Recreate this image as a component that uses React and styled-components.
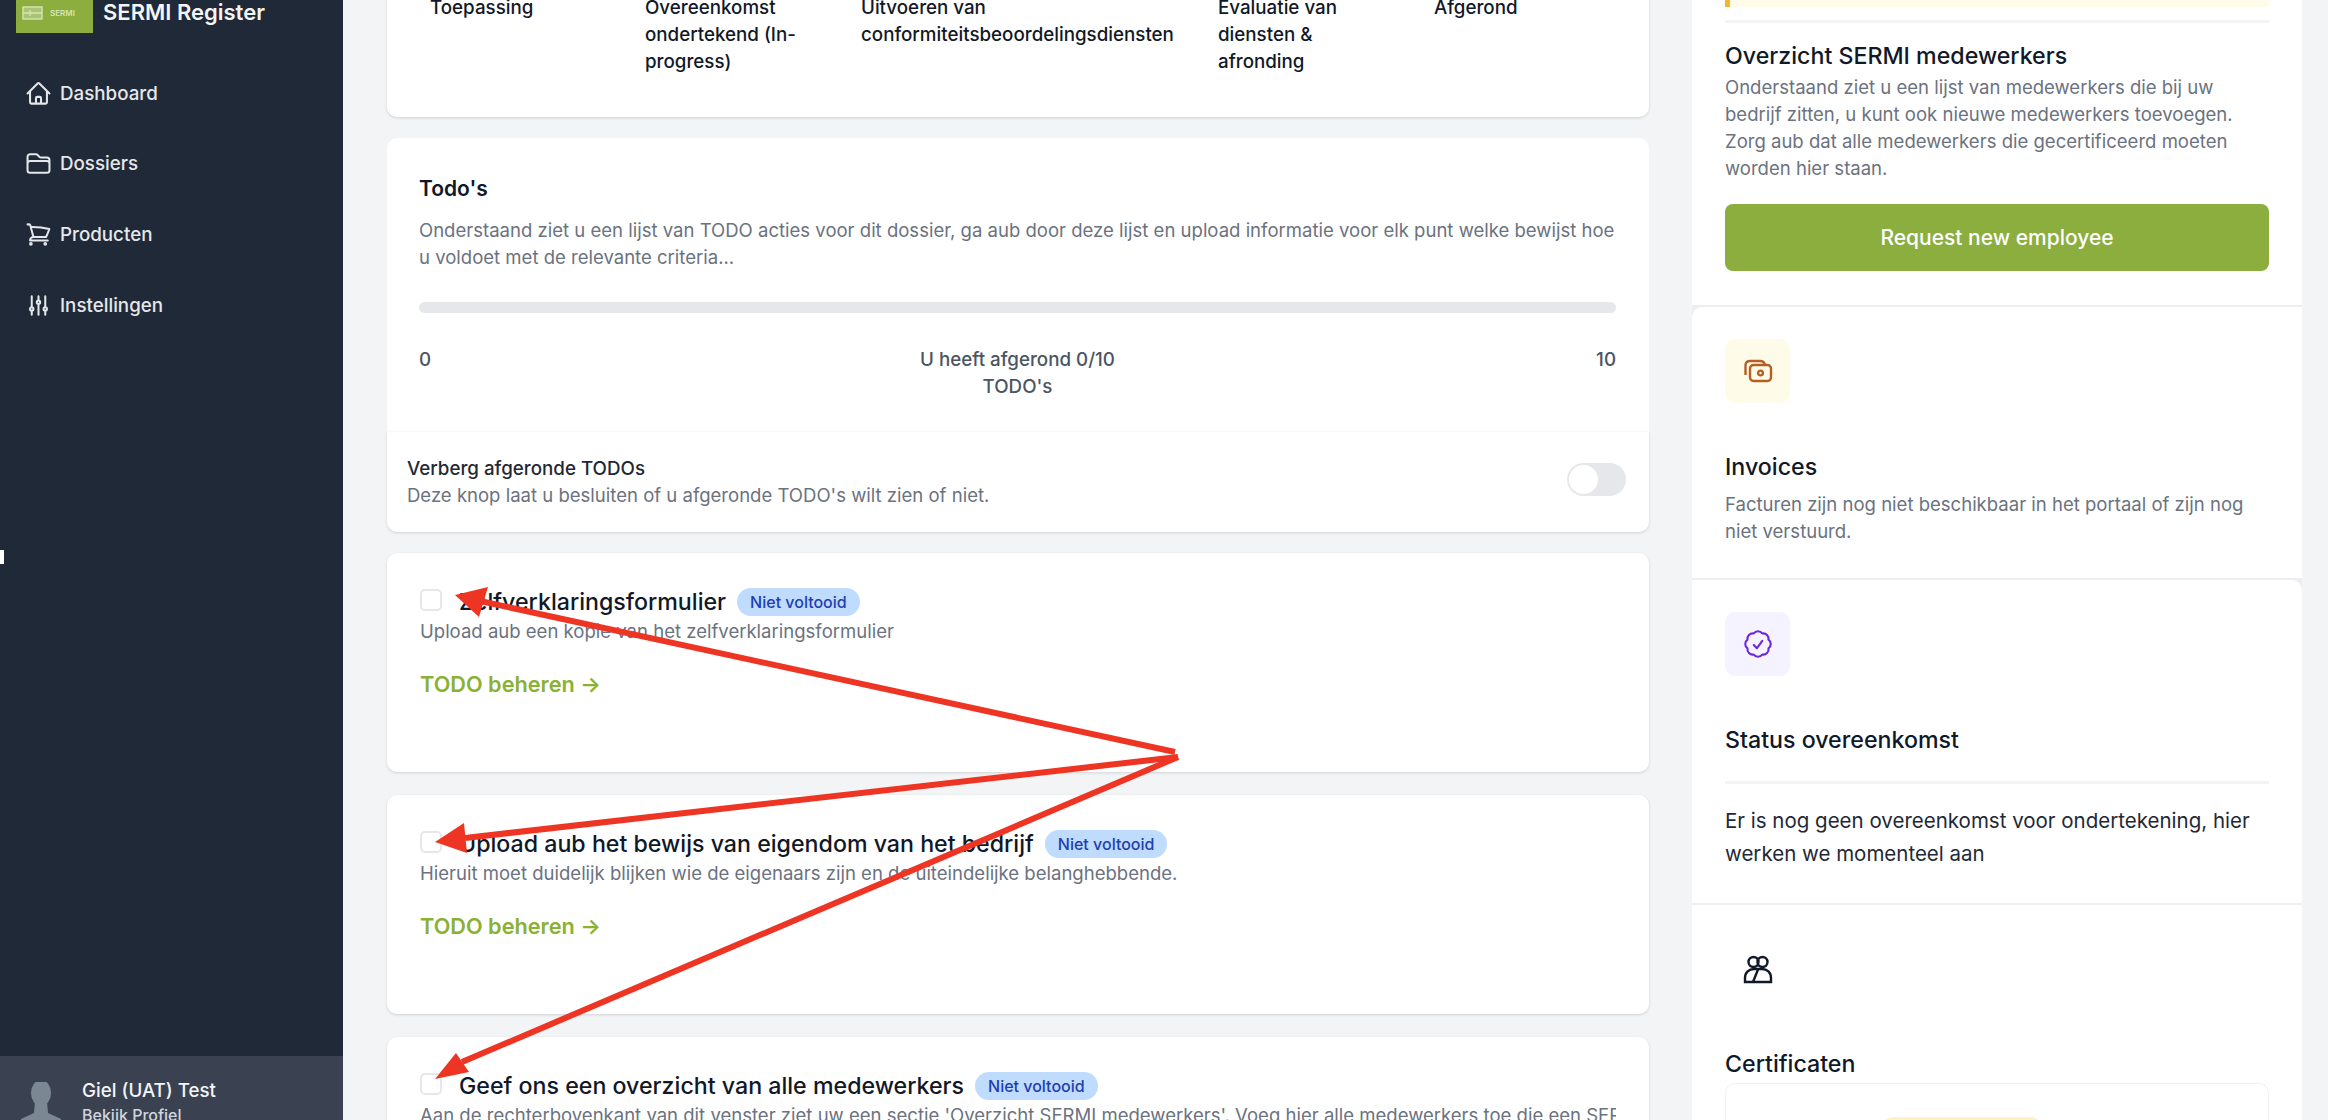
import React from "react";
import styled, { createGlobalStyle } from "styled-components";
import {
	HiOutlineHome,
	HiOutlineFolder,
	HiOutlineShoppingCart,
	HiOutlineAdjustmentsVertical,
	HiOutlineCheckBadge,
} from "react-icons/hi2";

const GlobalStyle = createGlobalStyle`
	html, body {
		margin: 0;
		padding: 0;
		height: 100%;
		overflow: hidden;
		background: #f3f4f6;
		font-family: Inter, "Liberation Sans", sans-serif;
		color: #111827;
	}
	* { box-sizing: border-box; }
`;

const Page = styled.div`
	position: relative;
	display: flex;
	width: 2328px;
	height: 1120px;
	overflow: hidden;
	background: #f3f4f6;
`;

const Sidebar = styled.aside`
	display: flex;
	flex-direction: column;
	flex: 0 0 343px;
	height: 1120px;
	background: #1f2937;
	overflow: hidden;
`;

const Brand = styled.div`
	display: flex;
	align-items: center;
	gap: 10px;
	height: 65px;
	margin-top: -32px;
	padding-left: 16px;
	flex: 0 0 auto;
`;

const BrandLogo = styled.div`
	display: flex;
	align-items: center;
	gap: 7px;
	width: 77px;
	height: 65px;
	padding: 25px 0 0 6px;
	background: #8bae3f;
`;

const BrandLogoText = styled.span`
	font-size: 8px;
	font-weight: 600;
	color: #d7e4b4;
`;

const BrandName = styled.span`
	padding-top: 23px;
	font-size: 22px;
	font-weight: 600;
	color: #f3f4f6;
`;

const Nav = styled.nav`
	display: flex;
	flex-direction: column;
	gap: 30.8px;
	padding: 40px 0 0 25px;
`;

const NavItem = styled.a`
	display: flex;
	align-items: center;
	gap: 8px;
	height: 40px;
	font-size: 18.76px;
	font-weight: 500;
	color: #e5e7eb;
	svg {
		font-size: 27px;
		stroke-width: 1.8;
	}
`;

const Profile = styled.div`
	display: flex;
	gap: 21px;
	flex: 0 0 64px;
	margin-top: auto;
	padding: 26px 0 0 21px;
	background: #3a4252;
	overflow: hidden;
`;

const ProfileText = styled.div`
	display: flex;
	flex-direction: column;
	margin-top: -4px;
	white-space: nowrap;
`;

const ProfileName = styled.span`
	font-size: 18.76px;
	font-weight: 500;
	line-height: 26px;
	color: #f3f4f6;
`;

const ProfileLink = styled.span`
	font-size: 16px;
	font-weight: 500;
	line-height: 22px;
	color: #d1d5db;
`;

const Tick = styled.span`
	position: absolute;
	left: 0;
	top: 550px;
	width: 4px;
	height: 14px;
	background: #fff;
`;

const Content = styled.main`
	display: flex;
	flex: 1;
	min-width: 0;
	gap: 43px;
	padding-left: 44px;
`;

const MainColumn = styled.div`
	display: flex;
	flex-direction: column;
	flex: 0 0 1262px;
	width: 1262px;
	min-width: 0;
	margin-top: -20px;
`;

const Card = styled.section`
	flex: none;
	background: #fff;
	border-radius: 10px;
	box-shadow: 0 1px 3px rgba(0, 0, 0, 0.14);
`;

const StepsCard = styled(Card)`
	display: grid;
	grid-template-columns: 215px 216px 357px 216px 1fr;
	height: 137px;
	margin-bottom: 21px;
	padding: 14px 0 0 43px;
`;

const Step = styled.div`
	padding-right: ${props => props.$inset}px;
	font-size: 18.76px;
	font-weight: 500;
	line-height: 27px;
	color: #111827;
`;

const TodoCard = styled(Card)`
	height: 294px;
	padding: 37px 33px 0 32px;
	border-radius: 10px 10px 0 0;
	box-shadow: none;
`;

const TodoTitle = styled.h2`
	margin: 0 0 14px;
	font-size: 21px;
	font-weight: 600;
	line-height: 28px;
	color: #111827;
`;

const Muted = styled.p`
	margin: 0;
	margin-top: ${props => props.$top || 0}px;
	font-size: 18.55px;
	line-height: 27px;
	color: #6b7280;
`;

const Progress = styled.div`
	height: 11px;
	margin: 31px 0 33px;
	border-radius: 6px;
	background: #e5e7eb;
`;

const ProgressLabels = styled.div`
	display: grid;
	grid-template-columns: 1fr 212px 1fr;
	font-size: 18.76px;
	font-weight: 500;
	line-height: 27px;
	color: #4b5563;
`;

const ProgressLabel = styled.div`
	text-align: ${props => props.$align};
`;

const FilterCard = styled(Card)`
	display: flex;
	align-items: center;
	justify-content: space-between;
	height: 100px;
	margin-bottom: 21px;
	padding: 0 23px 0 20px;
	border-radius: 0 0 10px 10px;
`;

const FilterTitle = styled.div`
	font-size: 18.76px;
	font-weight: 500;
	line-height: 27px;
	color: #1f2937;
`;

const Toggle = styled.span`
	display: block;
	width: 59px;
	height: 33px;
	margin-top: -6px;
	padding: 2px;
	border-radius: 17px;
	background: #e5e7eb;
`;

const ToggleKnob = styled.span`
	display: block;
	width: 29px;
	height: 29px;
	border-radius: 50%;
	background: #fff;
`;

const TodoItem = styled(Card)`
	height: 219px;
	margin-bottom: 23px;
	padding: 33px 33px 0;
`;

const TodoHeader = styled.div`
	display: flex;
	align-items: center;
	height: 32px;
`;

const Checkbox = styled.span`
	flex: 0 0 22px;
	height: 22px;
	margin: -4px 17px 0 0;
	border: 2px solid #e5e7eb;
	border-radius: 5px;
	background: #fff;
`;

const ItemTitle = styled.h3`
	margin: 0 11px 0 0;
	font-size: 23.2px;
	font-weight: 500;
	color: #111827;
`;

const Badge = styled.span`
	display: flex;
	align-items: center;
	height: 28px;
	padding: 0 13px;
	border-radius: 14px;
	background: #bfdbfe;
	font-size: 16px;
	font-weight: 500;
	color: #1e40af;
`;

const ItemText = styled(Muted)`
	margin-top: 0;
	white-space: nowrap;
	overflow: hidden;
`;

const ManageLink = styled.a`
	display: block;
	margin-top: 25px;
	font-size: 21.7px;
	font-weight: 600;
	line-height: 28px;
	color: #8bb133;
`;

const SideColumn = styled.div`
	display: flex;
	flex-direction: column;
	flex: 0 0 610px;
	gap: 2px;
	background: #eceef1;
`;

const SideCard = styled.section`
	flex: none;
	padding: ${props => props.$padding || "32px 33px 0"};
	height: ${props => props.$height}px;
	background: #fff;
	border-radius: ${props => props.$radius || "0"};
`;

const Notice = styled.div`
	height: 7px;
	border-left: 5px solid #f5b731;
	background: #fefce8;
`;

const Divider = styled.hr`
	height: 3px;
	margin: ${props => props.$margin};
	border: 0;
	background: #f3f4f6;
`;

const SideTitle = styled.h3`
	margin: 0;
	font-size: 23.2px;
	font-weight: 500;
	line-height: 32px;
	color: #111827;
`;

const WideButton = styled.button`
	display: block;
	width: 100%;
	height: 67px;
	margin-top: 22px;
	border: 0;
	border-radius: 8px;
	background: #8bae3f;
	font-family: inherit;
	font-size: 21px;
	font-weight: 500;
	color: #fff;
`;

const IconBox = styled.div`
	display: flex;
	align-items: center;
	justify-content: center;
	width: 65px;
	height: 64px;
	margin-bottom: ${props => props.$gap}px;
	border-radius: 10px;
	background: ${props => props.$bg};
	color: ${props => props.$color};
	font-size: 34px;
`;

const BodyText = styled.p`
	margin: 0;
	font-size: 20.5px;
	line-height: 33px;
	color: #1f2937;
`;

const CertificateCard = styled.div`
	height: 120px;
	margin-top: 3px;
	padding-top: 33px;
	border: 1px solid #f0f1f3;
	border-radius: 10px;
	background: #fff;
`;

const CertificateBadge = styled.div`
	width: 164px;
	height: 40px;
	margin-left: 154px;
	border-radius: 14px;
	background: #fef3c7;
`;

const AnnotationLayer = styled.svg`
	position: absolute;
	top: 0;
	left: 0;
	pointer-events: none;
`;

const MoneyIcon = () => (
	<svg width="30" height="30" viewBox="0 0 30 30" fill="none" stroke="currentColor" strokeWidth="2.4">
		<rect x="7" y="9" width="21" height="16" rx="3.5" />
		<path d="M2.5 19V9.5C2.5 6.5 4 5 7 5H17C20 5 21.5 6.5 22 9" />
		<circle cx="17.5" cy="17" r="2.4" />
	</svg>
);

const PeopleIcon = () => (
	<svg width="30" height="30" viewBox="0 0 30 30" fill="none" stroke="currentColor" strokeWidth="2.4">
		<circle cx="10.5" cy="8" r="5" />
		<circle cx="19.5" cy="8" r="5" />
		<path d="M2 28V24C2 18.5 6 15 11 15H19C24 15 28 18.5 28 24V28Z" />
		<path d="M15 15.5L10 28" />
	</svg>
);

const AvatarIcon = () => (
	<svg width="40" height="62" viewBox="0 0 40 62" fill="#7c8794">
		<ellipse cx="20" cy="11" rx="10" ry="13" />
		<path d="M14 20H26L27 31L40 37V62H0V37L13 31Z" />
	</svg>
);

const LogoMark = () => (
	<svg width="21" height="14" viewBox="0 0 21 14" fill="none" stroke="#d7e4b4" strokeWidth="1.4">
		<rect x="1" y="1" width="19" height="12" fill="#a9c472" />
		<path d="M1 7H20M8 4V10" />
	</svg>
);

const navItems = [
	{ label: "Dashboard", Icon: HiOutlineHome },
	{ label: "Dossiers", Icon: HiOutlineFolder },
	{ label: "Producten", Icon: HiOutlineShoppingCart },
	{ label: "Instellingen", Icon: HiOutlineAdjustmentsVertical },
];

const steps = [
	{ label: "Toepassing", inset: 40 },
	{ label: "Overeenkomst ondertekend (In-progress)", inset: 40 },
	{ label: "Uitvoeren van conformiteitsbeoordelingsdiensten", inset: 0 },
	{ label: "Evaluatie van diensten & afronding", inset: 40 },
	{ label: "Afgerond", inset: 0 },
];

const todos = [
	{
		title: "Zelfverklaringsformulier",
		text: "Upload aub een kopie van het zelfverklaringsformulier",
	},
	{
		title: "Upload aub het bewijs van eigendom van het bedrijf",
		text: "Hieruit moet duidelijk blijken wie de eigenaars zijn en de uiteindelijke belanghebbende.",
	},
	{
		title: "Geef ons een overzicht van alle medewerkers",
		text: "Aan de rechterbovenkant van dit venster ziet uw een sectie 'Overzicht SERMI medewerkers'. Voeg hier alle medewerkers toe die een SERMI certificaat nodig hebben.",
	},
];

const arrows = [
	{ line: "1175,752 480,601", head: "455,595 488,587 479,617" },
	{ line: "1178,757 465,838", head: "435,842 464,823 467,853" },
	{ line: "1178,757 462,1062", head: "435,1079 456,1053 469,1072" },
];

const App = () => {
	return (
		<Page>
			<GlobalStyle />
			<Sidebar>
				<Brand>
					<BrandLogo>
						<LogoMark />
						<BrandLogoText>SERMI</BrandLogoText>
					</BrandLogo>
					<BrandName>SERMI Register</BrandName>
				</Brand>
				<Nav>
					{navItems.map(({ label, Icon }) => (
						<NavItem key={label}>
							<Icon />
							{label}
						</NavItem>
					))}
				</Nav>
				<Profile>
					<AvatarIcon />
					<ProfileText>
						<ProfileName>Giel (UAT) Test</ProfileName>
						<ProfileLink>Bekijk Profiel</ProfileLink>
					</ProfileText>
				</Profile>
			</Sidebar>
			<Tick />
			<Content>
				<MainColumn>
					<StepsCard>
						{steps.map(step => (
							<Step key={step.label} $inset={step.inset}>
								{step.label}
							</Step>
						))}
					</StepsCard>
					<TodoCard>
						<TodoTitle>Todo's</TodoTitle>
						<Muted>
							Onderstaand ziet u een lijst van TODO acties voor dit dossier, ga aub door deze lijst en upload informatie voor elk punt welke bewijst hoe u voldoet met de relevante criteria...
						</Muted>
						<Progress />
						<ProgressLabels>
							<ProgressLabel $align="left">0</ProgressLabel>
							<ProgressLabel $align="center">U heeft afgerond 0/10 TODO's</ProgressLabel>
							<ProgressLabel $align="right">10</ProgressLabel>
						</ProgressLabels>
					</TodoCard>
					<FilterCard>
						<div>
							<FilterTitle>Verberg afgeronde TODOs</FilterTitle>
							<Muted>Deze knop laat u besluiten of u afgeronde TODO's wilt zien of niet.</Muted>
						</div>
						<Toggle>
							<ToggleKnob />
						</Toggle>
					</FilterCard>
					{todos.map(todo => (
						<TodoItem key={todo.title}>
							<TodoHeader>
								<Checkbox />
								<ItemTitle>{todo.title}</ItemTitle>
								<Badge>Niet voltooid</Badge>
							</TodoHeader>
							<ItemText>{todo.text}</ItemText>
							<ManageLink>TODO beheren →</ManageLink>
						</TodoItem>
					))}
				</MainColumn>
				<SideColumn>
					<SideCard $padding="0 33px" $height={305}>
						<Notice />
						<Divider $margin="13px 0 17px" />
						<SideTitle>Overzicht SERMI medewerkers</SideTitle>
						<Muted $top={2}>
							Onderstaand ziet u een lijst van medewerkers die bij uw bedrijf zitten, u kunt ook nieuwe medewerkers toevoegen. Zorg aub dat alle medewerkers die gecertificeerd moeten worden hier staan.
						</Muted>
						<WideButton>Request new employee</WideButton>
					</SideCard>
					<SideCard $height={271} $radius="10px 0 0 0">
						<IconBox $bg="#fefce8" $color="#b45f24" $gap={48}>
							<MoneyIcon />
						</IconBox>
						<SideTitle>Invoices</SideTitle>
						<Muted $top={8}>
							Facturen zijn nog niet beschikbaar in het portaal of zijn nog niet verstuurd.
						</Muted>
					</SideCard>
					<SideCard $height={323} $radius="0 10px 0 0">
						<IconBox $bg="#f5f3ff" $color="#6d28d9" $gap={48}>
							<HiOutlineCheckBadge />
						</IconBox>
						<SideTitle>Status overeenkomst</SideTitle>
						<Divider $margin="25px 0 20px" />
						<BodyText>
							Er is nog geen overeenkomst voor ondertekening, hier werken we momenteel aan
						</BodyText>
					</SideCard>
					<SideCard $height={240}>
						<IconBox $bg="#fff" $color="#111827" $gap={47}>
							<PeopleIcon />
						</IconBox>
						<SideTitle>Certificaten</SideTitle>
						<CertificateCard>
							<CertificateBadge />
						</CertificateCard>
					</SideCard>
				</SideColumn>
			</Content>
			<AnnotationLayer width="2328" height="1120" viewBox="0 0 2328 1120">
				{arrows.map(arrow => (
					<g key={arrow.head}>
						<polyline points={arrow.line} fill="none" stroke="#ee3524" strokeWidth="6" />
						<polygon points={arrow.head} fill="#ee3524" />
					</g>
				))}
			</AnnotationLayer>
		</Page>
	);
};

export default App;
